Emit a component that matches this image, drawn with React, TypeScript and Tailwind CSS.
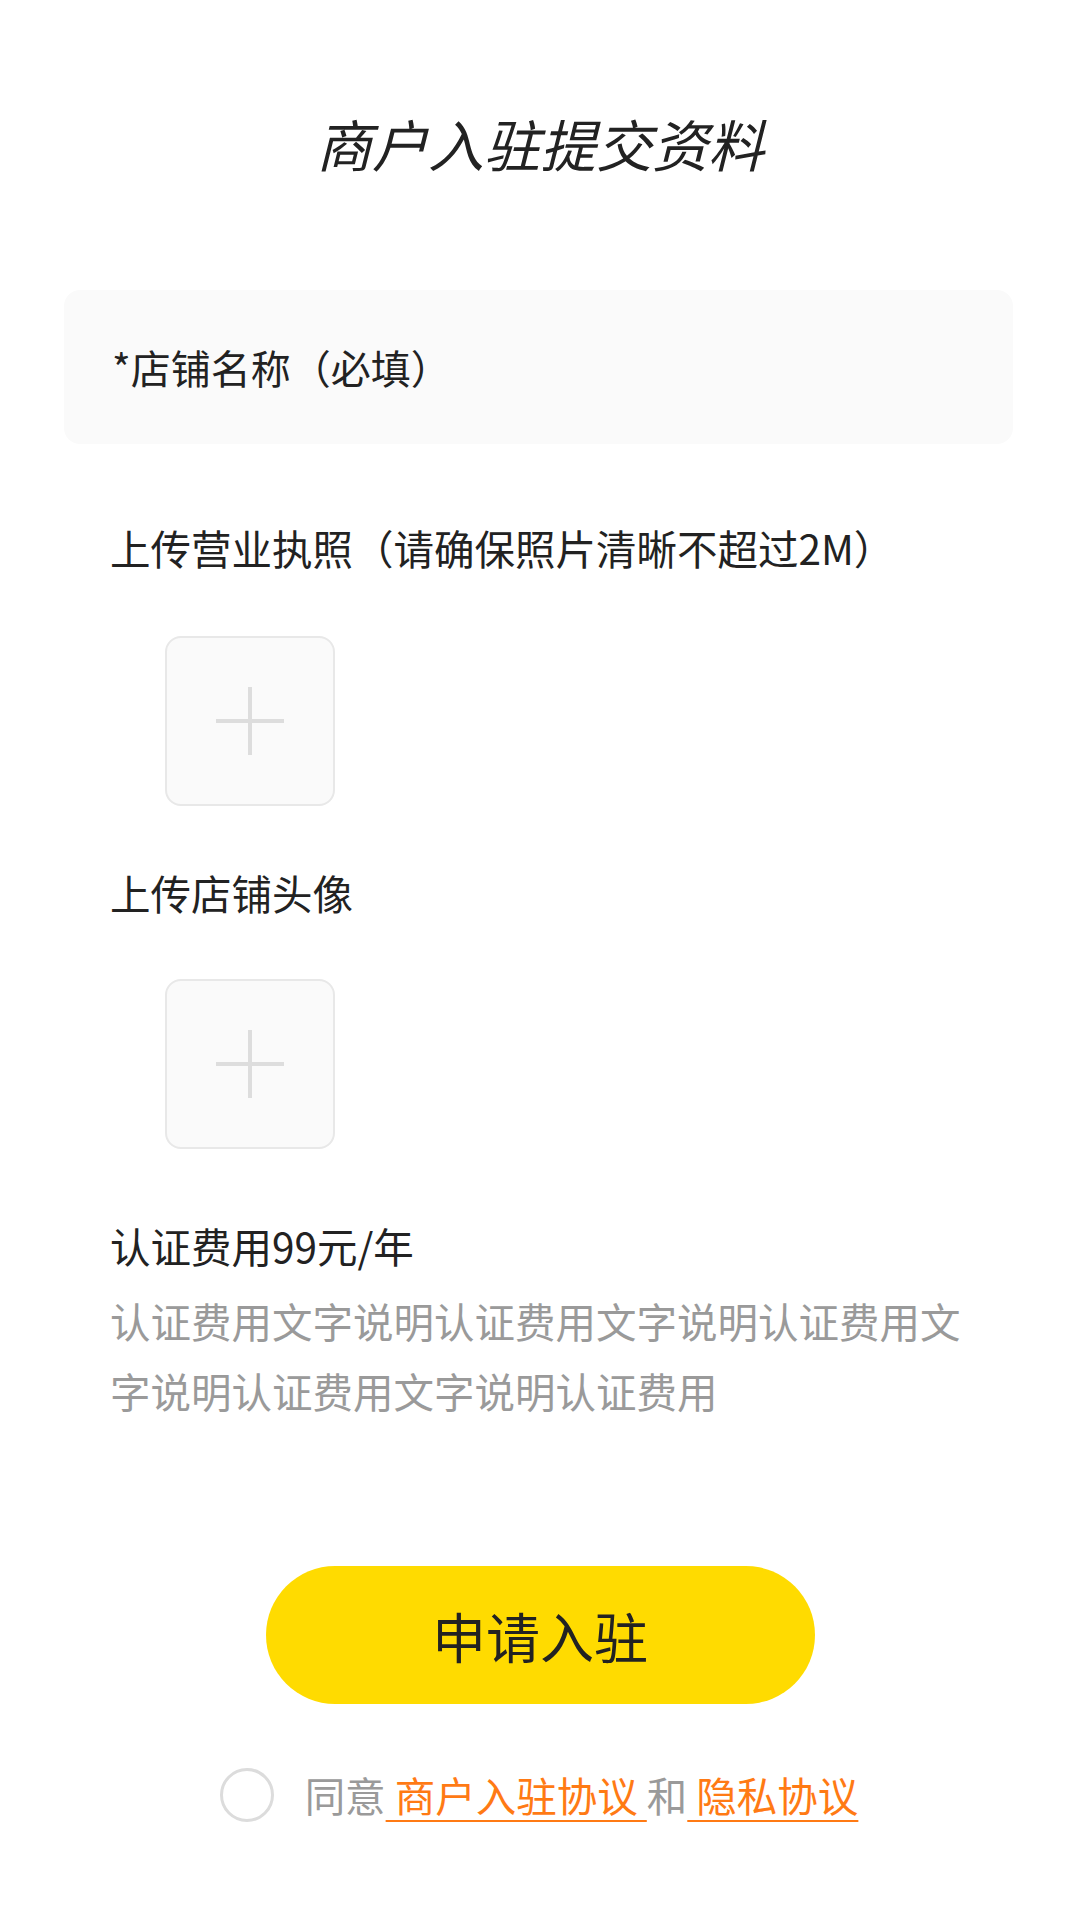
import React from "react";

function UploadBox() {
  return (
    <div className="ml-[55px] w-[170px] h-[170px] rounded-[16px] border-2 border-[#e8e8e8] bg-[#fafafa] flex items-center justify-center">
      <div className="relative w-[68px] h-[68px]">
        <div className="absolute left-0 top-[32px] w-[68px] h-[4px] bg-[#dddddd]" />
        <div className="absolute top-0 left-[32px] h-[68px] w-[4px] bg-[#dddddd]" />
      </div>
    </div>
  );
}

export default function App() {
  return (
    <div className="w-[1080px] h-[1920px] bg-white text-[#222222] font-['Noto_Sans_CJK_SC','Noto_Sans',sans-serif]">
      <h1 className="pt-[104px] text-center text-[56px] leading-[78px] italic font-normal">
        商户入驻提交资料
      </h1>

      <div className="mt-[108px] ml-[64px] w-[949px] h-[154px] rounded-[16px] bg-[#fafafa] flex items-center pl-[48px] text-[40px]">
        *店铺名称（必填）
      </div>

      <div className="px-[110px]">
        <div className="mt-[76px] text-[40.5px] leading-[56px]">
          上传营业执照（请确保照片清晰不超过2M）
        </div>
        <div className="mt-[60px]">
          <UploadBox />
        </div>

        <div className="mt-[59px] text-[40.5px] leading-[56px]">上传店铺头像</div>
        <div className="mt-[58px]">
          <UploadBox />
        </div>

        <div className="mt-[69px] text-[40.5px] leading-[56px]">认证费用99元/年</div>
        <p className="mt-[12px] text-[40.5px] leading-[70px] text-[#9a9a9a]">
          认证费用文字说明认证费用文字说明认证费用文字说明认证费用文字说明认证费用
        </p>
      </div>

      <div className="mt-[140px] flex justify-center">
        <button className="w-[549px] h-[138px] rounded-full bg-[#ffdb00] text-[54px] text-[#222222] flex items-center justify-center">
          申请入驻
        </button>
      </div>

      <div className="mt-[63px] flex items-center justify-center h-[56px] pr-[2px]">
        <div className="w-[54px] h-[54px] rounded-full border-[3px] border-[#dcdcdc] mr-[31px]" />
        <div className="text-[40.5px] leading-[56px] text-[#9a9a9a] whitespace-pre">
          同意<span className="text-[#ff7a14] underline underline-offset-[8px] decoration-2">{" 商户入驻协议 "}</span>和<span className="text-[#ff7a14] underline underline-offset-[8px] decoration-2">{" 隐私协议"}</span>
        </div>
      </div>
    </div>
  );
}
